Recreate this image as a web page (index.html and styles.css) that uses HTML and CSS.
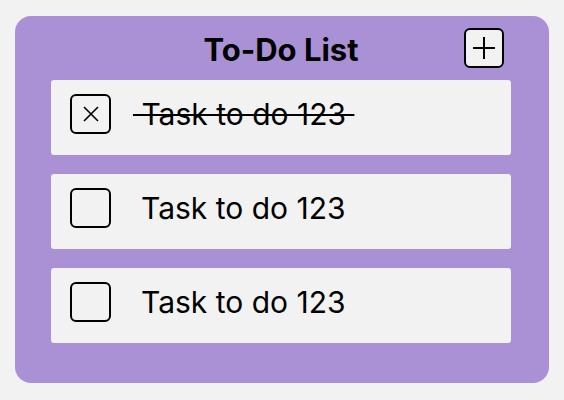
FILE: index.html
```html
<!DOCTYPE html>
<html lang="en">
<head>
<meta charset="utf-8">
<title>To-Do List</title>
<link rel="stylesheet" href="styles.css">
</head>
<body>
<main class="card">
  <header class="header">
    <h1 class="title">To-Do List</h1>
    <button class="add-btn" type="button" aria-label="Add task">
      <svg width="24" height="24" viewBox="0 0 24 24" aria-hidden="true">
        <path d="M12 1V23M1 12H23" stroke="#000" stroke-width="2" fill="none"/>
      </svg>
    </button>
  </header>
  <ul class="list">
    <li class="row done">
      <span class="check">
        <svg width="16" height="16" viewBox="0 0 16 16" aria-hidden="true">
          <path d="M1 1L15 15M15 1L1 15" stroke="#000" stroke-width="1.6" fill="none"/>
        </svg>
      </span>
      <span class="label">&nbsp;Task to do 123&nbsp;</span>
    </li>
    <li class="row">
      <span class="check"></span>
      <span class="label">Task to do 123</span>
    </li>
    <li class="row">
      <span class="check"></span>
      <span class="label">Task to do 123</span>
    </li>
  </ul>
</main>
</body>
</html>
```
FILE: styles.css
```css
html, body {
  margin: 0;
  padding: 0;
}
body {
  background: #f2f2f2;
  padding: 16px 0 0 15px;
  font-family: "Inter", "Noto Sans", sans-serif;
  color: #000;
}
.card {
  width: 534px;
  box-sizing: border-box;
  background: #aa91d6;
  border-radius: 16px;
  padding: 12px 38px 40px 36px;
}
.header {
  display: grid;
  grid-template-columns: 1fr auto 1fr;
  align-items: center;
  height: 40px;
  margin-bottom: 12px;
}
.title {
  grid-column: 2;
  margin: 0;
  padding-top: 4px;
  font-size: 31px;
  font-weight: 700;
  line-height: 36px;
  white-space: nowrap;
}
.add-btn {
  grid-column: 3;
  justify-self: end;
  margin-right: 7px;
  width: 40px;
  height: 40px;
  box-sizing: border-box;
  border: 2px solid #000;
  border-radius: 6px;
  background: #f2f2f2;
  padding: 0;
  display: flex;
  align-items: center;
  justify-content: center;
}
.list {
  list-style: none;
  margin: 0;
  padding: 0;
  display: flex;
  flex-direction: column;
  gap: 19px;
}
.row {
  height: 75px;
  box-sizing: border-box;
  background: #f2f2f2;
  border-radius: 3px;
  padding: 0 19px 7px 19px;
  display: flex;
  align-items: center;
  gap: 30px;
}
.check {
  width: 41px;
  height: 40px;
  flex: none;
  box-sizing: border-box;
  border: 2px solid #000;
  border-radius: 6px;
  display: flex;
  align-items: center;
  justify-content: center;
}
.label {
  font-size: 30px;
  line-height: 36px;
  white-space: nowrap;
}
.done .label {
  margin-left: -8px;
  text-decoration: line-through;
  text-decoration-thickness: 2px;
}
```
